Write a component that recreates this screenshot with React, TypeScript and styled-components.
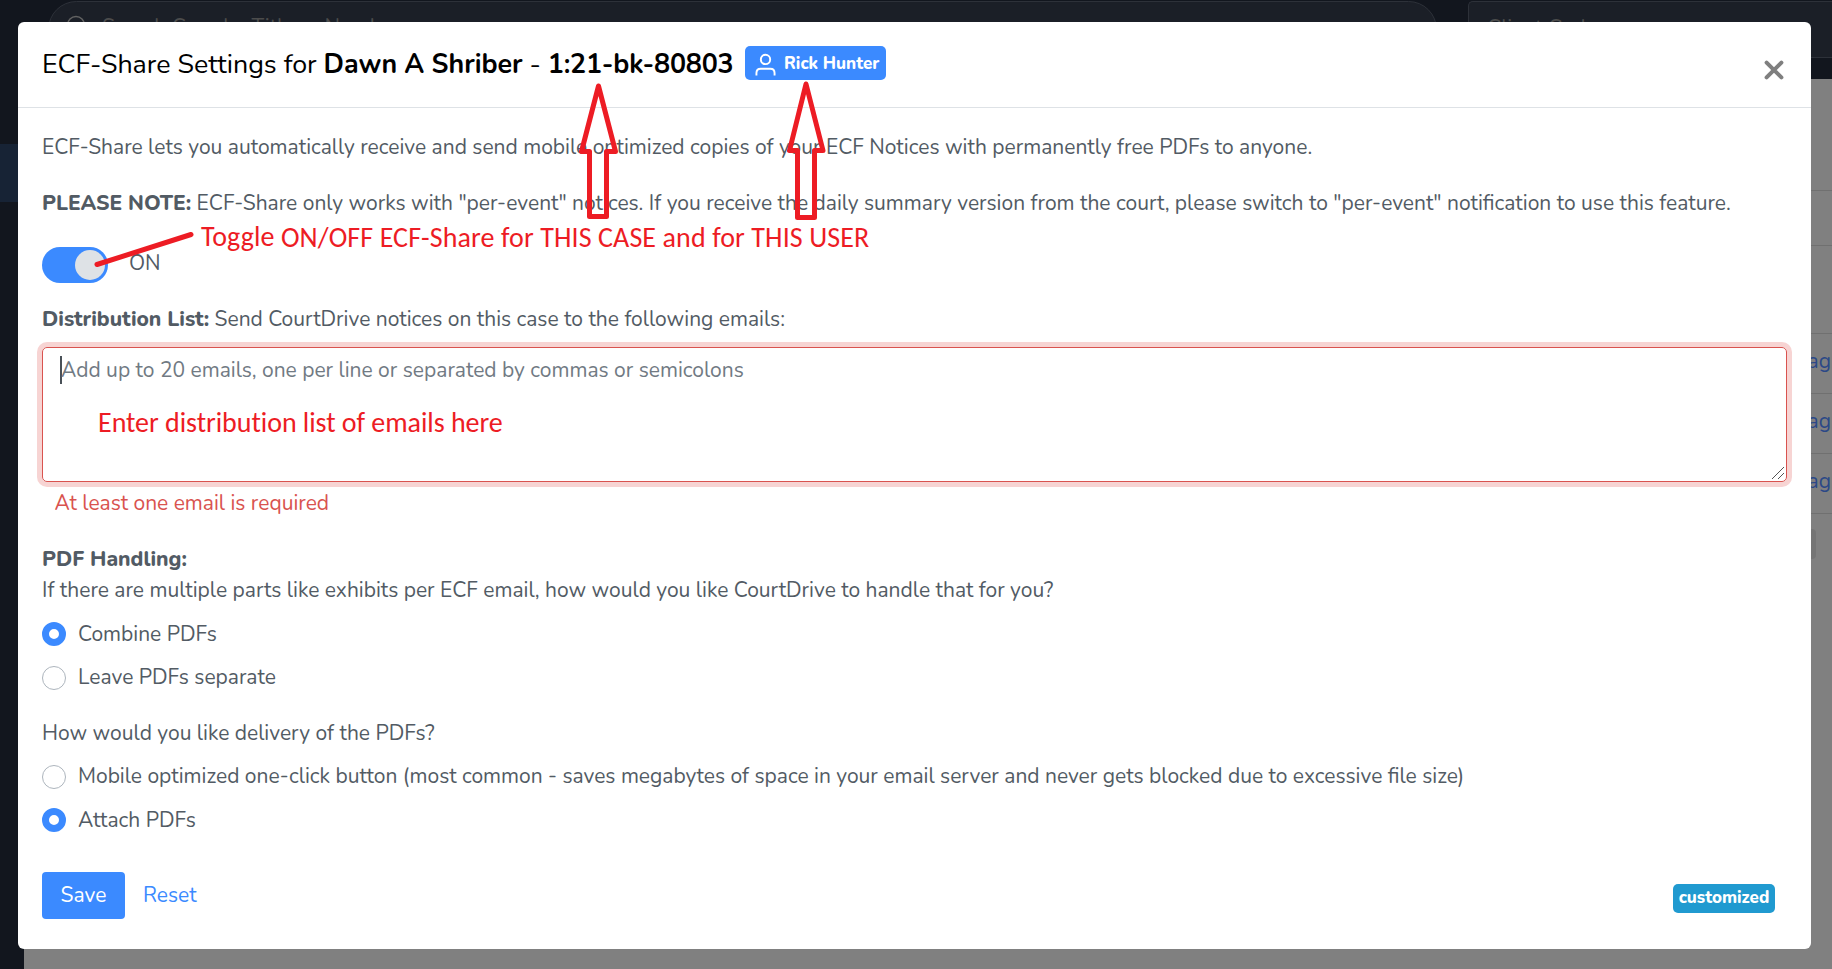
import type { ReactNode } from "react";
import styled, { createGlobalStyle } from "styled-components";

const App = () => {
  return (
    <Page>
      <Global />
      <Backdrop>
        <Sidebar>
          <ActiveItem />
        </Sidebar>
        <Main>
          <Navbar>
            <SearchBox>
              <SearchIcon viewBox="0 0 24 24">
                <circle cx="11" cy="11" r="8.5" />
                <path d="M17.5 17.5 L23 23" />
              </SearchIcon>
              Search Case by Title or Number
            </SearchBox>
            <ClientSelect>Client Code</ClientSelect>
          </Navbar>
          <Table>
            <TableRow $height={112} />
            <TableRow $height={55} />
            <TableRow $height={88} />
            <TableRow $height={60}>ag</TableRow>
            <TableRow $height={60}>ag</TableRow>
            <TableRow $height={60}>ag</TableRow>
            <Pager />
          </Table>
        </Main>
      </Backdrop>

      <Modal>
        <Header>
          <Title>
            ECF-Share Settings for <b>Dawn A Shriber</b> - <CaseNumber>1:21-bk-80803</CaseNumber>
          </Title>
          <UserBadge>
            <UserIcon viewBox="0 0 22 24">
              <circle cx="11" cy="6.2" r="4.9" />
              <path d="M1.5 23 V20.5 Q1.5 16 6 16 H16 Q20.5 16 20.5 20.5 V23" />
            </UserIcon>
            Rick Hunter
          </UserBadge>
          <Close viewBox="0 0 20 20">
            <path d="M2.6 2.6 L17.4 17.4 M17.4 2.6 L2.6 17.4" />
          </Close>
        </Header>

        <Body>
          <Text>
            ECF-Share lets you automatically receive and send mobile optimized copies of your ECF
            Notices with permanently free PDFs to anyone.
          </Text>
          <Text $top={25}>
            <Strong>PLEASE NOTE:</Strong> ECF-Share only works with "per-event" notices. If you
            receive the daily summary version from the court, please switch to "per-event"
            notification to use this feature.
          </Text>
          <SwitchRow>
            <Switch>
              <Knob />
            </Switch>
            <SwitchLabel>ON</SwitchLabel>
          </SwitchRow>
          <Text $top={21}>
            <Strong>Distribution List:</Strong> Send CourtDrive notices on this case to the
            following emails:
          </Text>
          <Field>
            <Caret />
            Add up to 20 emails, one per line or separated by commas or semicolons
            <Grip viewBox="0 0 12 12">
              <path d="M0 12 L12 0 M6 12 L12 6" />
            </Grip>
          </Field>
          <ErrorText>At least one email is required</ErrorText>
          <Text $top={25}>
            <Strong>PDF Handling:</Strong>
          </Text>
          <Text>
            If there are multiple parts like exhibits per ECF email, how would you like CourtDrive
            to handle that for you?
          </Text>
          <Option $top={13} $radioTop={3} checked>
            Combine PDFs
          </Option>
          <Option $top={12} $radioTop={4}>
            Leave PDFs separate
          </Option>
          <Text $top={25}>How would you like delivery of the PDFs?</Text>
          <Option $top={12} $radioTop={4}>
            Mobile optimized one-click button (most common - saves megabytes of space in your email
            server and never gets blocked due to excessive file size)
          </Option>
          <Option $top={13} $radioTop={3}  checked>
            Attach PDFs
          </Option>
          <Footer>
            <SaveButton>Save</SaveButton>
            <ResetLink>Reset</ResetLink>
            <Tag>customized</Tag>
          </Footer>
        </Body>
      </Modal>

      <Marks viewBox="0 0 1832 969">
        <path d="M598.5 86 L581.5 151.5 H589.5 V216.5 H606.5 V151.5 H615.5 Z" />
        <path d="M806 84 L789.5 150.5 H797.5 V217.5 H814.5 V150.5 H823 Z" />
        <path d="M97 264.5 L191 234.5" />
      </Marks>
      <Note $x={201} $y={220} $spacing={0.1}>
        <Raised>Toggle</Raised> ON/OFF ECF-Share for THIS CASE and for THIS USER
      </Note>
      <Note $x={98} $y={405} $spacing={-0.04}>
        Enter distribution list of emails here
      </Note>
    </Page>
  );
};

export default App;

type OptionProps = { $top: number; $radioTop: number; checked?: boolean; children: ReactNode };

const Option = ({ $top, $radioTop, checked, children }: OptionProps) => (
  <OptionRow $top={$top}>
    <Radio $on={checked} $top={$radioTop} />
    {children}
  </OptionRow>
);

const Global = createGlobalStyle`
* {
  box-sizing: border-box;
}
body {
  margin: 0;
  overflow: hidden;
}
`;
const Page = styled.div`
  position: relative;
  width: 1832px;
  height: 969px;
  overflow: hidden;
  font-family: Nunito, Lato, sans-serif;
  font-size: 21px;
  line-height: 31px;
  color: #525b64;
`;
const Backdrop = styled.div`
  display: flex;
  width: 100%;
  height: 100%;
  background: #808080;
`;
const Sidebar = styled.div`
  width: 24px;
  padding-top: 144px;
  background: #12161e;
`;
const ActiveItem = styled.div`
  height: 58px;
  background: #172335;
`;
const Main = styled.div`
  flex: 1;
`;
const Navbar = styled.div`
  display: flex;
  gap: 31px;
  height: 79px;
  padding: 1px 0 21px 24px;
  background: #12161e;
`;
const SearchBox = styled.div`
  display: flex;
  align-items: center;
  gap: 13px;
  width: 1389px;
  padding: 0 0 4px 16px;
  border: 1px solid #2d3139;
  border-radius: 29px;
  background: #1b1f27;
  color: #4c4c4c;
`;
const SearchIcon = styled.svg`
  width: 24px;
  height: 24px;
  margin-top: -3px;
  fill: none;
  stroke: #626262;
  stroke-width: 1.5;
`;
const ClientSelect = styled.div`
  display: flex;
  flex: 1;
  align-items: center;
  padding: 0 0 2px 18px;
  border: 1px solid #2d3139;
  border-right: 0;
  border-radius: 5px 0 0 5px;
  background: #1b1f27;
  color: #4c4c4c;
`;
const Table = styled.div`
  display: flex;
  flex-direction: column;
`;
const TableRow = styled.div<{ $height: number }>`
  display: flex;
  align-items: center;
  justify-content: flex-end;
  height: ${(p) => p.$height}px;
  padding: 0 1px 4px 0;
  border-bottom: 1px solid #707070;
  color: #2b4887;
`;
const Pager = styled.div`
  width: 100px;
  height: 30px;
  margin: 15px 16px 0 auto;
  border-radius: 4px;
  background: #757575;
`;
const Modal = styled.div`
  position: absolute;
  top: 22px;
  left: 18px;
  display: flex;
  flex-direction: column;
  width: 1793px;
  height: 927px;
  border-radius: 6px;
  background: #fff;
`;
const Header = styled.div`
  display: flex;
  align-items: flex-start;
  height: 86px;
  padding: 24px 27px 0 24px;
  border-bottom: 1px solid #dee2e6;
`;
const Title = styled.div`
  width: 691px;
  font-size: 26.8px;
  line-height: 37px;
  color: #000;
  white-space: nowrap;
`;
const CaseNumber = styled.b`
  letter-spacing: -0.2px;
`;
const UserBadge = styled.div`
  display: flex;
  align-items: center;
  gap: 8px;
  width: 141px;
  height: 34px;
  margin-left: 12px;
  padding-left: 10px;
  border-radius: 5px;
  background: #3b8aff;
  color: #fff;
  font-size: 17px;
  font-weight: 800;
  white-space: nowrap;
`;
const UserIcon = styled.svg`
  width: 21px;
  height: 24px;
  margin-top: 3px;
  fill: none;
  stroke: #fff;
  stroke-width: 2;
`;
const Close = styled.svg`
  width: 20px;
  height: 20px;
  margin: 13.5px 0 0 auto;
  fill: none;
  stroke: #7f7f7f;
  stroke-width: 4;
  stroke-linecap: round;
`;
const Body = styled.div`
  flex: 1;
  padding: 24px 24px 0;
`;
const Text = styled.div<{ $top?: number }>`
  margin-top: ${(p) => p.$top ?? 0}px;
  white-space: nowrap;
`;
const Strong = styled.b`
  font-weight: 800;
`;
const SwitchRow = styled.div`
  display: flex;
  gap: 21px;
  margin-top: 28px;
`;
const Switch = styled.div`
  display: flex;
  align-items: center;
  justify-content: flex-end;
  width: 66px;
  height: 36px;
  padding-right: 3px;
  border-radius: 18px;
  background: #3b8aff;
`;
const Knob = styled.div`
  width: 30px;
  height: 30px;
  border-radius: 50%;
  background: #dee2e6;
`;
const SwitchLabel = styled.div`
  margin-top: 1px;
`;
const Field = styled.div`
  position: relative;
  display: flex;
  height: 135px;
  margin-top: 12px;
  padding: 7px 17px;
  border: 1px solid #d9534f;
  border-radius: 5px;
  box-shadow: 0 0 0 5px #f7d4d3;
  color: #717a83;
`;
const Caret = styled.div`
  width: 2px;
  height: 28px;
  margin: 1px -1px 0 0;
  background: #495057;
`;
const Grip = styled.svg`
  position: absolute;
  right: 2px;
  bottom: 2px;
  width: 12px;
  height: 12px;
  stroke: #555;
  stroke-width: 1;
`;
const ErrorText = styled.div`
  margin: 6px 0 0 12.5px;
  color: #d9534f;
`;
const OptionRow = styled.div<{ $top: number }>`
  display: flex;
  gap: 12px;
  margin-top: ${(p) => p.$top}px;
  white-space: nowrap;
`;
const Radio = styled.div<{ $on?: boolean; $top: number }>`
  width: 24px;
  height: 24px;
  margin-top: ${(p) => p.$top}px;
  border: ${(p) => (p.$on ? "7px solid #3b8aff" : "1px solid #adb5bd")};
  border-radius: 50%;
  background: #fff;
`;
const Footer = styled.div`
  display: flex;
  align-items: center;
  height: 47px;
  margin-top: 36px;
`;
const SaveButton = styled.button`
  width: 83px;
  height: 47px;
  padding: 0;
  border: 0;
  border-radius: 4px;
  background: #3b8aff;
  color: #fff;
  font: inherit;
`;
const ResetLink = styled.a`
  margin: 0 0 0 18px;
  color: #3b8aff;
`;
const Tag = styled.div`
  width: 102px;
  height: 29px;
  margin: 6px 12px 0 auto;
  border-radius: 5px;
  background: #209ad0;
  color: #fff;
  font-size: 17px;
  font-weight: 800;
  line-height: 28px;
  text-align: center;
`;
const Marks = styled.svg`
  position: absolute;
  inset: 0;
  width: 1832px;
  height: 969px;
  fill: none;
  stroke: #ed1c24;
  stroke-width: 5;
  stroke-linecap: round;
  stroke-linejoin: round;
`;
const Note = styled.div<{ $x: number; $y: number; $spacing: number }>`
  position: absolute;
  top: ${(p) => p.$y}px;
  left: ${(p) => p.$x}px;
  color: #ed1c24;
  font-family: Carlito, "Open Sans", sans-serif;
  font-size: 28px;
  line-height: 36px;
  letter-spacing: ${(p) => p.$spacing}px;
  white-space: nowrap;
`;
const Raised = styled.span`
  position: relative;
  top: -1px;
`;
